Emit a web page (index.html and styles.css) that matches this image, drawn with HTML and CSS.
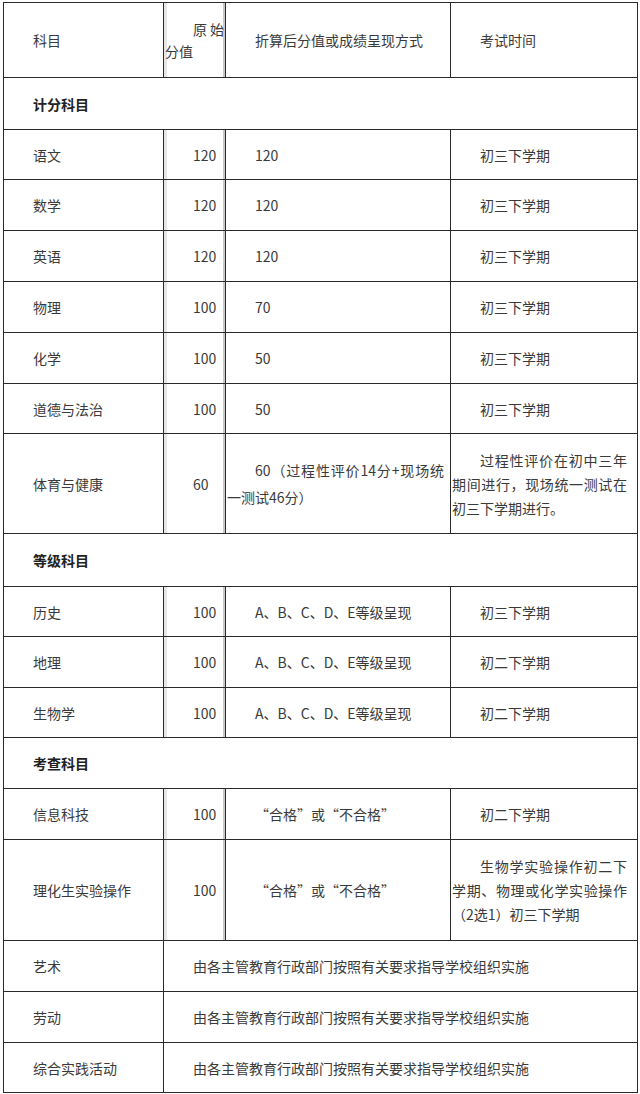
FILE: index.html
```html
<!DOCTYPE html>
<html lang="zh-CN">
<head>
<meta charset="utf-8">
<title>科目</title>
<link rel="stylesheet" href="styles.css">
</head>
<body>
<table class="grid">
  <colgroup><col class="c1"><col class="c2"><col class="c3"><col class="c4"></colgroup>
  <tr class="r-head"><td>科目</td><td class="num">原始分值</td><td>折算后分值或成绩呈现方式</td><td>考试时间</td></tr>
  <tr class="r-sec"><td colspan="4" class="sec">计分科目</td></tr>
  <tr class="r50"><td>语文</td><td class="num">120</td><td>120</td><td>初三下学期</td></tr>
  <tr class="r51"><td>数学</td><td class="num">120</td><td>120</td><td>初三下学期</td></tr>
  <tr class="r51"><td>英语</td><td class="num">120</td><td>120</td><td>初三下学期</td></tr>
  <tr class="r51"><td>物理</td><td class="num">100</td><td>70</td><td>初三下学期</td></tr>
  <tr class="r51"><td>化学</td><td class="num">100</td><td>50</td><td>初三下学期</td></tr>
  <tr class="r50"><td>道德与法治</td><td class="num">100</td><td>50</td><td>初三下学期</td></tr>
  <tr class="r-tall"><td>体育与健康</td><td class="num">60</td><td class="wrap3">60（过程性评价14分+现场统一测试46分）</td><td class="wrap4">过程性评价在初中三年期间进行，现场统一测试在初三下学期进行。</td></tr>
  <tr class="r-sec2"><td colspan="4" class="sec">等级科目</td></tr>
  <tr class="r50"><td>历史</td><td class="num">100</td><td>A、B、C、D、E等级呈现</td><td>初三下学期</td></tr>
  <tr class="r51"><td>地理</td><td class="num">100</td><td>A、B、C、D、E等级呈现</td><td>初二下学期</td></tr>
  <tr class="r50"><td>生物学</td><td class="num">100</td><td>A、B、C、D、E等级呈现</td><td>初二下学期</td></tr>
  <tr class="r-sec3"><td colspan="4" class="sec">考查科目</td></tr>
  <tr class="r51"><td>信息科技</td><td class="num">100</td><td>“合格”或“不合格”</td><td>初二下学期</td></tr>
  <tr class="r-tall2"><td>理化生实验操作</td><td class="num">100</td><td>“合格”或“不合格”</td><td class="wrap4">生物学实验操作初二下学期、物理或化学实验操作（2选1）初三下学期</td></tr>
  <tr class="r51"><td>艺术</td><td colspan="3">由各主管教育行政部门按照有关要求指导学校组织实施</td></tr>
  <tr class="r51"><td>劳动</td><td colspan="3">由各主管教育行政部门按照有关要求指导学校组织实施</td></tr>
  <tr class="r50"><td>综合实践活动</td><td colspan="3">由各主管教育行政部门按照有关要求指导学校组织实施</td></tr>
</table>
</body>
</html>
```

FILE: styles.css
```css
html, body {
  margin: 0;
  padding: 0;
  background: #ffffff;
}

body {
  padding: 2px 0 0 3px;
  font-family: "Noto Sans CJK SC", "Noto Sans", sans-serif;
  font-size: 14px;
  color: #3a3a3a;
}

.grid {
  border-collapse: collapse;
  table-layout: fixed;
  width: 634px;
}

.c1 { width: 160px; }
.c2 { width: 62px; }
.c3 { width: 225px; }
.c4 { width: 187px; }

.grid td {
  border: 1px solid #2a2a2a;
  padding: 0 1px;
  text-indent: 28px;
  text-align: justify;
  vertical-align: middle;
  line-height: 24px;
  overflow: hidden;
}

.grid td.num {
  box-shadow: inset 3px 0 0 #e6e6e6, inset -2px 0 0 #c8c8c8;
  line-height: 22px;
}

.grid td.sec {
  font-weight: bold;
  color: #222222;
}

.grid td.wrap3 {
  padding-right: 6px;
  line-height: 27px;
}

.grid td.wrap4 {
  padding-right: 10px;
}

.r-head { height: 75px; }
.r-sec { height: 52px; }
.r-sec2 { height: 53px; }
.r-sec3 { height: 51px; }
.r50 { height: 50px; }
.r51 { height: 51px; }
.r-tall { height: 100px; }
.r-tall2 { height: 101px; }
```
